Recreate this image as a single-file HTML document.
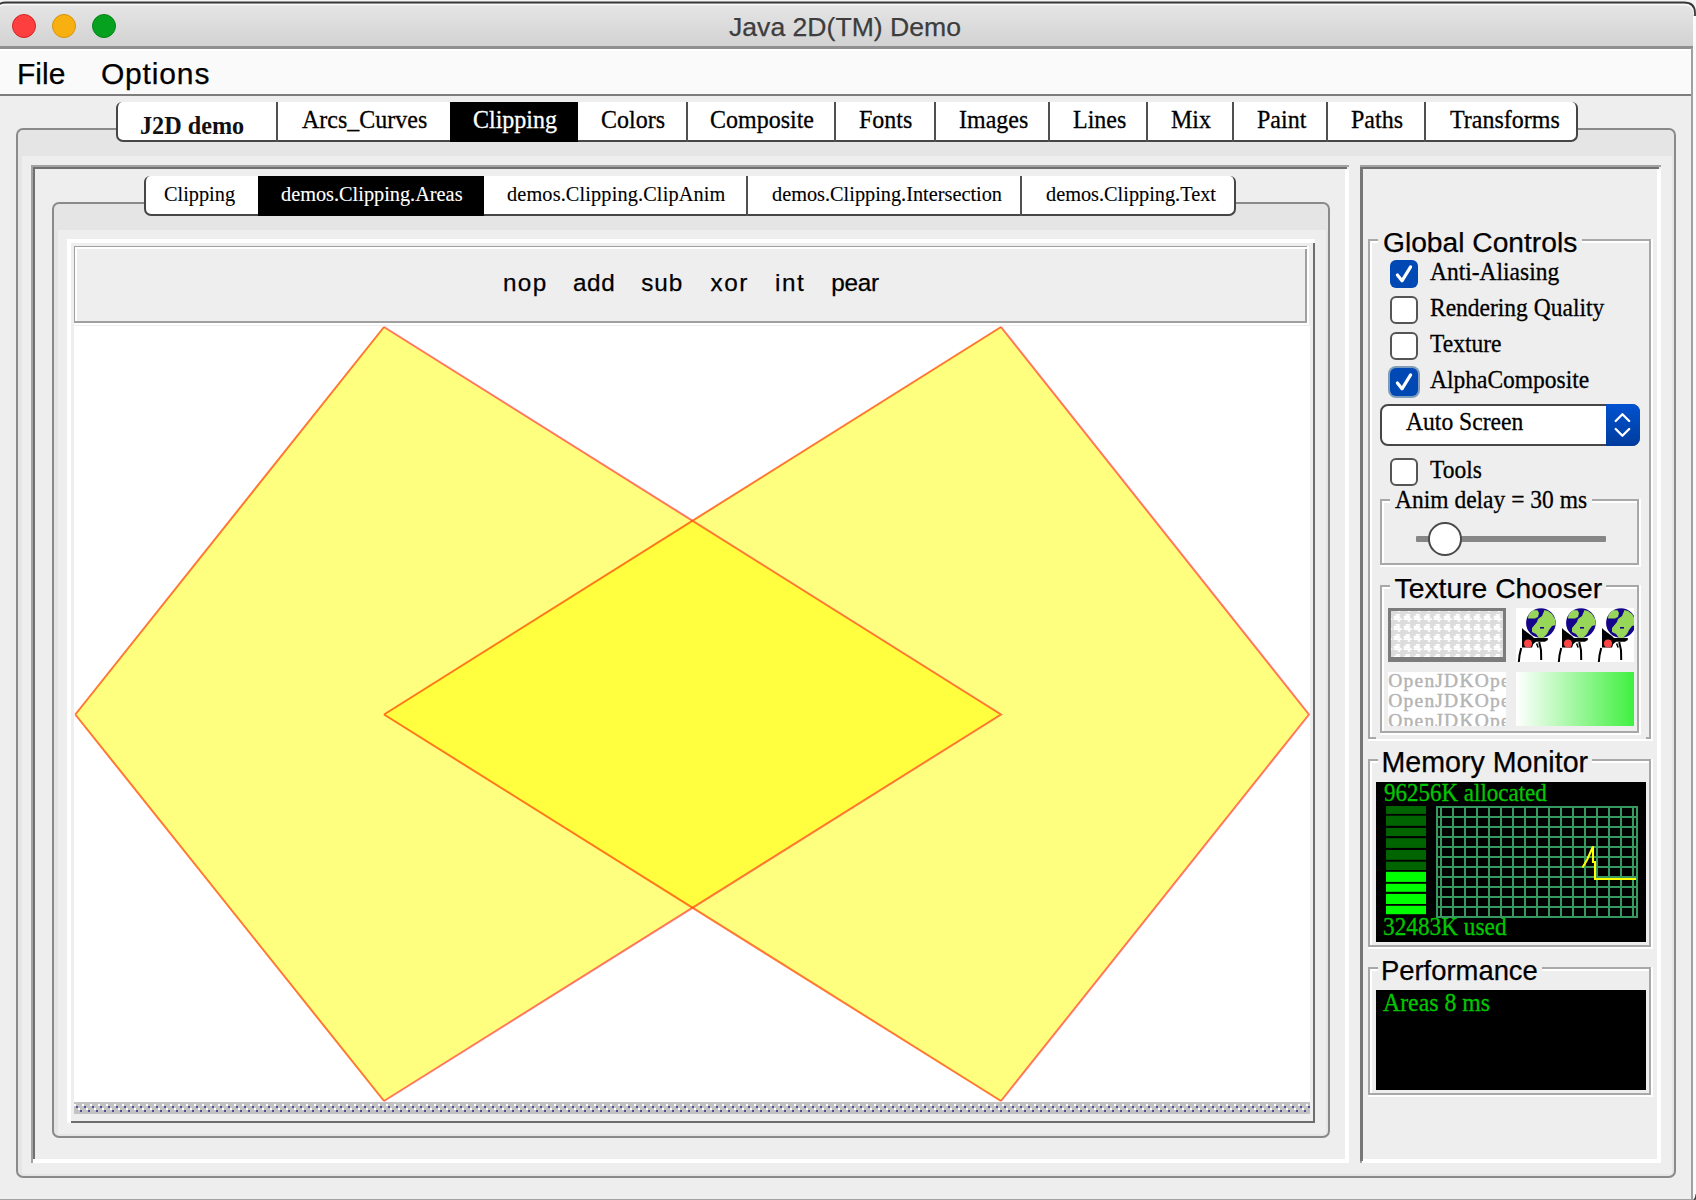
<!DOCTYPE html><html><head><meta charset="utf-8"><style>html,body{margin:0;padding:0;width:1696px;height:1200px;overflow:hidden;position:relative}</style></head><body><div style="position:absolute;left:0px;top:0px;width:1696px;height:1200px;background:#eeeeee"></div>
<div style="position:absolute;left:0px;top:0px;width:1696px;height:49px;background:#f4f4f4"></div>
<svg style="position:absolute;left:0;top:0" width="1696" height="50">
<defs><linearGradient id="tg" x1="0" y1="0" x2="0" y2="1"><stop offset="0" stop-color="#e6e6e6"/><stop offset="1" stop-color="#d2d2d2"/></linearGradient></defs>
<path d="M-4 46.5 L-4 13 Q-4 3 6 3 L1684 3 Q1694 3 1694 13 L1694 46.5 Z" fill="url(#tg)"/>
<path d="M-4 13 Q-4 3 6 3 L1684 3 Q1694 3 1694 13" fill="none" stroke="#fff" stroke-opacity="0.8" stroke-width="1.2" transform="translate(0,1.6)"/>
<path d="M-4.5 13 Q-4.5 2.5 6 2.5 L1684 2.5 Q1695 2.5 1695 13 L1695 16" fill="none" stroke="#383838" stroke-width="1.8"/>
</svg>
<div style="position:absolute;left:0px;top:46px;width:1694px;height:3px;background:#8f8f8f"></div>
<div style="position:absolute;left:12px;top:14px;width:24px;height:24px;box-sizing:border-box;border-radius:50%;background:#fe3f40;border:1.3px solid #d42426"></div>
<div style="position:absolute;left:52px;top:14px;width:24px;height:24px;box-sizing:border-box;border-radius:50%;background:#f7b00f;border:1.3px solid #d4940c"></div>
<div style="position:absolute;left:92px;top:14px;width:24px;height:24px;box-sizing:border-box;border-radius:50%;background:#06a11f;border:1.3px solid #04841a"></div>
<div style="position:absolute;left:729.00px;top:13.78px;font-family:'Liberation Sans', sans-serif;font-size:26.60px;line-height:26.60px;color:#3d3d3d;font-weight:normal;white-space:nowrap;-webkit-text-stroke:0.25px #3d3d3d;">Java 2D(TM) Demo</div>
<div style="position:absolute;left:0px;top:49px;width:1692px;height:45px;background:#fafafa"></div>
<div style="position:absolute;left:0px;top:49px;width:1692px;height:1.5px;background:#fff"></div>
<div style="position:absolute;left:0px;top:94px;width:1692px;height:2px;background:#7d7d7d"></div>
<div style="position:absolute;left:17.00px;top:58.61px;font-family:'Liberation Sans', sans-serif;font-size:30.00px;line-height:30.00px;color:#000;font-weight:normal;white-space:nowrap;-webkit-text-stroke:0.25px #000;">File</div>
<div style="position:absolute;left:100.90px;top:58.61px;font-family:'Liberation Sans', sans-serif;font-size:30.00px;line-height:30.00px;color:#000;font-weight:normal;white-space:nowrap;-webkit-text-stroke:0.25px #000;letter-spacing:0.85px">Options</div>
<div style="position:absolute;left:1691px;top:48px;width:2px;height:1152px;background:#a0a0a0"></div>
<div style="position:absolute;left:1693px;top:16px;width:3px;height:1184px;background:#fbfbfb"></div>
<svg style="position:absolute;left:1686px;top:1190px" width="10" height="10"><path d="M7.5 10.5 Q10 9 10.5 4" fill="none" stroke="#3a3a3a" stroke-width="1.8"/></svg>
<div style="position:absolute;left:0px;top:1198.5px;width:1693px;height:1.5px;background:#a3a3a3"></div>
<div style="position:absolute;left:16px;top:128px;width:1660px;height:1049.5px;box-sizing:border-box;border:2px solid #8a8a8a;border-radius:7px;background:#e5e5e5"></div>
<div style="position:absolute;left:22px;top:156px;width:1650px;height:1018px;background:#eeeeee"></div>
<div style="position:absolute;left:116px;top:102px;width:1462px;height:39.69999999999999px;box-sizing:border-box;border:2px solid #464646;border-top:0;border-radius:6px 6px 7px 7px;background:#fff"></div>
<div style="position:absolute;left:450px;top:102px;width:128px;height:39.69999999999999px;background:#000"></div>
<div style="position:absolute;left:276px;top:102px;width:2px;height:39.69999999999999px;background:#505050"></div>
<div style="position:absolute;left:686px;top:102px;width:2px;height:39.69999999999999px;background:#505050"></div>
<div style="position:absolute;left:834px;top:102px;width:2px;height:39.69999999999999px;background:#505050"></div>
<div style="position:absolute;left:934px;top:102px;width:2px;height:39.69999999999999px;background:#505050"></div>
<div style="position:absolute;left:1048px;top:102px;width:2px;height:39.69999999999999px;background:#505050"></div>
<div style="position:absolute;left:1146px;top:102px;width:2px;height:39.69999999999999px;background:#505050"></div>
<div style="position:absolute;left:1232px;top:102px;width:2px;height:39.69999999999999px;background:#505050"></div>
<div style="position:absolute;left:1326px;top:102px;width:2px;height:39.69999999999999px;background:#505050"></div>
<div style="position:absolute;left:1424px;top:102px;width:2px;height:39.69999999999999px;background:#505050"></div>
<div style="position:absolute;left:139.50px;top:112.72px;font-family:'Liberation Serif', serif;font-size:25.17px;line-height:25.17px;color:#111;font-weight:bold;white-space:nowrap;transform:scaleX(0.9615);transform-origin:0 0;">J2D demo</div>
<div style="position:absolute;left:301.50px;top:107.09px;font-family:'Liberation Serif', serif;font-size:25.92px;line-height:25.92px;color:#000;font-weight:normal;white-space:nowrap;transform:scaleX(0.9259);transform-origin:0 0;-webkit-text-stroke:0.3px #000;">Arcs_Curves</div>
<div style="position:absolute;left:472.60px;top:107.09px;font-family:'Liberation Serif', serif;font-size:25.92px;line-height:25.92px;color:#fff;font-weight:normal;white-space:nowrap;transform:scaleX(0.9259);transform-origin:0 0;-webkit-text-stroke:0.3px #fff;">Clipping</div>
<div style="position:absolute;left:600.80px;top:107.09px;font-family:'Liberation Serif', serif;font-size:25.92px;line-height:25.92px;color:#000;font-weight:normal;white-space:nowrap;transform:scaleX(0.9259);transform-origin:0 0;-webkit-text-stroke:0.3px #000;">Colors</div>
<div style="position:absolute;left:710.40px;top:107.09px;font-family:'Liberation Serif', serif;font-size:25.92px;line-height:25.92px;color:#000;font-weight:normal;white-space:nowrap;transform:scaleX(0.9259);transform-origin:0 0;-webkit-text-stroke:0.3px #000;">Composite</div>
<div style="position:absolute;left:859.00px;top:107.09px;font-family:'Liberation Serif', serif;font-size:25.92px;line-height:25.92px;color:#000;font-weight:normal;white-space:nowrap;transform:scaleX(0.9259);transform-origin:0 0;-webkit-text-stroke:0.3px #000;">Fonts</div>
<div style="position:absolute;left:959.00px;top:107.09px;font-family:'Liberation Serif', serif;font-size:25.92px;line-height:25.92px;color:#000;font-weight:normal;white-space:nowrap;transform:scaleX(0.9259);transform-origin:0 0;-webkit-text-stroke:0.3px #000;">Images</div>
<div style="position:absolute;left:1073.00px;top:107.09px;font-family:'Liberation Serif', serif;font-size:25.92px;line-height:25.92px;color:#000;font-weight:normal;white-space:nowrap;transform:scaleX(0.9259);transform-origin:0 0;-webkit-text-stroke:0.3px #000;">Lines</div>
<div style="position:absolute;left:1170.80px;top:107.09px;font-family:'Liberation Serif', serif;font-size:25.92px;line-height:25.92px;color:#000;font-weight:normal;white-space:nowrap;transform:scaleX(0.9259);transform-origin:0 0;-webkit-text-stroke:0.3px #000;">Mix</div>
<div style="position:absolute;left:1256.80px;top:107.09px;font-family:'Liberation Serif', serif;font-size:25.92px;line-height:25.92px;color:#000;font-weight:normal;white-space:nowrap;transform:scaleX(0.9259);transform-origin:0 0;-webkit-text-stroke:0.3px #000;">Paint</div>
<div style="position:absolute;left:1351.30px;top:107.09px;font-family:'Liberation Serif', serif;font-size:25.92px;line-height:25.92px;color:#000;font-weight:normal;white-space:nowrap;transform:scaleX(0.9259);transform-origin:0 0;-webkit-text-stroke:0.3px #000;">Paths</div>
<div style="position:absolute;left:1450.00px;top:107.09px;font-family:'Liberation Serif', serif;font-size:25.92px;line-height:25.92px;color:#000;font-weight:normal;white-space:nowrap;transform:scaleX(0.9259);transform-origin:0 0;-webkit-text-stroke:0.3px #000;">Transforms</div>
<div style="position:absolute;left:31px;top:165px;width:1318px;height:2px;background:#a2a2a2"></div>
<div style="position:absolute;left:31px;top:165px;width:2px;height:998px;background:#a2a2a2"></div>
<div style="position:absolute;left:33px;top:167px;width:1314px;height:2px;background:#707070"></div>
<div style="position:absolute;left:33px;top:167px;width:2px;height:994px;background:#707070"></div>
<div style="position:absolute;left:1345px;top:169px;width:4px;height:994px;background:#fff"></div>
<div style="position:absolute;left:33px;top:1159px;width:1316px;height:4px;background:#fff"></div>
<div style="position:absolute;left:1360px;top:165px;width:301px;height:2px;background:#a2a2a2"></div>
<div style="position:absolute;left:1360px;top:165px;width:2px;height:998px;background:#a2a2a2"></div>
<div style="position:absolute;left:1362px;top:167px;width:297px;height:2px;background:#707070"></div>
<div style="position:absolute;left:1362px;top:167px;width:2px;height:994px;background:#707070"></div>
<div style="position:absolute;left:1657px;top:169px;width:4px;height:994px;background:#fff"></div>
<div style="position:absolute;left:1362px;top:1159px;width:299px;height:4px;background:#fff"></div>
<div style="position:absolute;left:1360px;top:167px;width:3px;height:994px;background:#777"></div>
<div style="position:absolute;left:1363px;top:169px;width:1px;height:990px;background:#eeeeee"></div>
<div style="position:absolute;left:52px;top:202px;width:1278px;height:935.7px;box-sizing:border-box;border:2px solid #8a8a8a;border-radius:7px;background:#e5e5e5"></div>
<div style="position:absolute;left:58px;top:230px;width:1268px;height:904px;background:#eeeeee"></div>
<div style="position:absolute;left:144px;top:176px;width:1092px;height:39.599999999999994px;box-sizing:border-box;border:2px solid #464646;border-top:0;border-radius:6px 6px 7px 7px;background:#fff"></div>
<div style="position:absolute;left:258px;top:176px;width:226px;height:39.599999999999994px;background:#000"></div>
<div style="position:absolute;left:746px;top:176px;width:2px;height:39.599999999999994px;background:#505050"></div>
<div style="position:absolute;left:1020px;top:176px;width:2px;height:39.599999999999994px;background:#505050"></div>
<div style="position:absolute;left:163.50px;top:184.45px;font-family:'Liberation Serif', serif;font-size:21.32px;line-height:21.32px;color:#000;font-weight:normal;white-space:nowrap;transform:scaleX(0.9524);transform-origin:0 0;-webkit-text-stroke:0.12px #000;">Clipping</div>
<div style="position:absolute;left:281.20px;top:184.45px;font-family:'Liberation Serif', serif;font-size:21.32px;line-height:21.32px;color:#fff;font-weight:normal;white-space:nowrap;transform:scaleX(0.9524);transform-origin:0 0;-webkit-text-stroke:0.12px #fff;">demos.Clipping.Areas</div>
<div style="position:absolute;left:507.30px;top:184.45px;font-family:'Liberation Serif', serif;font-size:21.32px;line-height:21.32px;color:#000;font-weight:normal;white-space:nowrap;transform:scaleX(0.9524);transform-origin:0 0;-webkit-text-stroke:0.12px #000;letter-spacing:0.14px">demos.Clipping.ClipAnim</div>
<div style="position:absolute;left:772.00px;top:184.45px;font-family:'Liberation Serif', serif;font-size:21.32px;line-height:21.32px;color:#000;font-weight:normal;white-space:nowrap;transform:scaleX(0.9524);transform-origin:0 0;-webkit-text-stroke:0.12px #000;">demos.Clipping.Intersection</div>
<div style="position:absolute;left:1046.00px;top:184.45px;font-family:'Liberation Serif', serif;font-size:21.32px;line-height:21.32px;color:#000;font-weight:normal;white-space:nowrap;transform:scaleX(0.9524);transform-origin:0 0;-webkit-text-stroke:0.12px #000;">demos.Clipping.Text</div>
<div style="position:absolute;left:67px;top:239px;width:1248px;height:884px;background:#fff"></div>
<div style="position:absolute;left:71px;top:243px;width:1242px;height:878px;background:#eeeeee"></div>
<div style="position:absolute;left:1313px;top:243px;width:2px;height:880px;background:#6e6e6e"></div>
<div style="position:absolute;left:71px;top:1121px;width:1244px;height:2px;background:#6e6e6e"></div>
<div style="position:absolute;left:74px;top:246px;width:1233px;height:77px;background:#a0a0a0"></div>
<div style="position:absolute;left:75px;top:247px;width:1232px;height:76px;background:#fff"></div>
<div style="position:absolute;left:77px;top:249px;width:1228px;height:72px;background:#eeeeee"></div>
<div style="position:absolute;left:1305px;top:249px;width:2px;height:74px;background:#a0a0a0"></div>
<div style="position:absolute;left:74px;top:321px;width:1233px;height:2px;background:#a0a0a0"></div>
<div style="position:absolute;left:1307px;top:246px;width:2px;height:79px;background:#fff"></div>
<div style="position:absolute;left:74px;top:323px;width:1235px;height:2px;background:#fff"></div>
<div style="position:absolute;left:503.00px;top:271.43px;font-family:'Liberation Sans', sans-serif;font-size:24.30px;line-height:24.30px;color:#000;font-weight:normal;white-space:nowrap;-webkit-text-stroke:0.25px #000;letter-spacing:1.3px">nop</div>
<div style="position:absolute;left:573.00px;top:271.43px;font-family:'Liberation Sans', sans-serif;font-size:24.30px;line-height:24.30px;color:#000;font-weight:normal;white-space:nowrap;-webkit-text-stroke:0.25px #000;letter-spacing:0.6px">add</div>
<div style="position:absolute;left:641.30px;top:271.43px;font-family:'Liberation Sans', sans-serif;font-size:24.30px;line-height:24.30px;color:#000;font-weight:normal;white-space:nowrap;-webkit-text-stroke:0.25px #000;letter-spacing:0.85px">sub</div>
<div style="position:absolute;left:710.50px;top:271.43px;font-family:'Liberation Sans', sans-serif;font-size:24.30px;line-height:24.30px;color:#000;font-weight:normal;white-space:nowrap;-webkit-text-stroke:0.25px #000;letter-spacing:1.5px">xor</div>
<div style="position:absolute;left:775.10px;top:271.43px;font-family:'Liberation Sans', sans-serif;font-size:24.30px;line-height:24.30px;color:#000;font-weight:normal;white-space:nowrap;-webkit-text-stroke:0.25px #000;letter-spacing:1.5px">int</div>
<div style="position:absolute;left:831.30px;top:271.43px;font-family:'Liberation Sans', sans-serif;font-size:24.30px;line-height:24.30px;color:#000;font-weight:normal;white-space:nowrap;-webkit-text-stroke:0.25px #000;letter-spacing:-0.3px">pear</div>
<div style="position:absolute;left:74px;top:325px;width:1236px;height:1px;background:#ededed"></div>
<div style="position:absolute;left:74px;top:326px;width:1236px;height:776px;background:#fff"></div>
<svg style="position:absolute;left:0;top:0" width="1696" height="1200" viewBox="0 0 1696 1200">
<defs><clipPath id="cv"><rect x="74" y="326" width="1236" height="776"/></clipPath>
<pattern id="chk" x="74" y="1102" width="8" height="12" patternUnits="userSpaceOnUse">
<rect width="8" height="12" fill="#c2c2c2"/>
<rect x="0" y="2" width="2" height="2" fill="#fff"/>
<rect x="2" y="4" width="2" height="2" fill="#50509a"/>
<rect x="4" y="6" width="2" height="2" fill="#fff"/>
<rect x="6" y="8" width="2" height="2" fill="#50509a"/>
</pattern></defs>
<g clip-path="url(#cv)">
<polygon points="384,327 1001,714.5 384,1101 75.3,714.5" fill="rgba(255,255,0,0.5)"/>
<polygon points="1001,327 1309,714.5 1001,1101 384,714.5" fill="rgba(255,255,0,0.5)"/>
<g fill="none" stroke-width="2" stroke-linecap="butt">
<path d="M75.3 714.5 L384 327 M75.3 714.5 L384 1101" stroke="rgba(255,75,0,0.75)"/>
<path d="M384 327 L1001 714.5 L384 1101" stroke="rgba(255,10,10,0.55)"/>
<path d="M384 714.5 L1001 327 M384 714.5 L1001 1101" stroke="rgba(255,75,0,0.75)"/>
<path d="M1001 327 L1309 714.5 L1001 1101" stroke="rgba(255,10,10,0.55)"/>
</g>
</g>
<rect x="74" y="1102" width="1236" height="12" fill="url(#chk)"/>
</svg>
<div style="position:absolute;left:1368px;top:239px;width:283px;height:500px;box-sizing:border-box;border:2px solid #a8a8a8"></div>
<div style="position:absolute;left:1370px;top:241px;width:279px;height:496px;box-sizing:border-box;border-top:2px solid #fff;border-left:2px solid #fff"></div>
<div style="position:absolute;left:1368px;top:739px;width:285px;height:2px;background:#fff"></div>
<div style="position:absolute;left:1651px;top:239px;width:2px;height:502px;background:#fff"></div>
<div style="position:absolute;left:1377.7px;top:237px;width:204.29999999999995px;height:7px;background:#eeeeee"></div>
<div style="position:absolute;left:1383.00px;top:228.13px;font-family:'Liberation Sans', sans-serif;font-size:28.20px;line-height:28.20px;color:#000;font-weight:normal;white-space:nowrap;-webkit-text-stroke:0.25px #000;">Global Controls</div>
<div style="position:absolute;left:1390px;top:260px;width:28px;height:28px;box-sizing:border-box;border-radius:6px;background:#0048b4"></div>
<svg style="position:absolute;left:1390px;top:260px" width="28" height="28"><path d="M7.4 15 L12 20.8 L20.6 6.9" fill="none" stroke="#fff" stroke-width="3.2" stroke-linecap="round" stroke-linejoin="round"/></svg>
<div style="position:absolute;left:1430.40px;top:258.74px;font-family:'Liberation Serif', serif;font-size:25.38px;line-height:25.38px;color:#000;font-weight:normal;white-space:nowrap;transform:scaleX(0.9259);transform-origin:0 0;-webkit-text-stroke:0.3px #000;">Anti-Aliasing</div>
<div style="position:absolute;left:1390px;top:296px;width:28px;height:28px;box-sizing:border-box;border-radius:6px;background:#fff;border:2px solid #555"></div>
<div style="position:absolute;left:1430.40px;top:294.74px;font-family:'Liberation Serif', serif;font-size:25.38px;line-height:25.38px;color:#000;font-weight:normal;white-space:nowrap;transform:scaleX(0.9259);transform-origin:0 0;-webkit-text-stroke:0.3px #000;">Rendering Quality</div>
<div style="position:absolute;left:1390px;top:332px;width:28px;height:28px;box-sizing:border-box;border-radius:6px;background:#fff;border:2px solid #555"></div>
<div style="position:absolute;left:1430.40px;top:330.74px;font-family:'Liberation Serif', serif;font-size:25.38px;line-height:25.38px;color:#000;font-weight:normal;white-space:nowrap;transform:scaleX(0.9259);transform-origin:0 0;-webkit-text-stroke:0.3px #000;">Texture</div>
<div style="position:absolute;left:1390px;top:368px;width:28px;height:28px;box-sizing:border-box;border-radius:6px;background:#0048b4;box-shadow:0 0 0 2px rgba(90,130,170,0.75)"></div>
<svg style="position:absolute;left:1390px;top:368px" width="28" height="28"><path d="M7.4 15 L12 20.8 L20.6 6.9" fill="none" stroke="#fff" stroke-width="3.2" stroke-linecap="round" stroke-linejoin="round"/></svg>
<div style="position:absolute;left:1430.40px;top:366.74px;font-family:'Liberation Serif', serif;font-size:25.38px;line-height:25.38px;color:#000;font-weight:normal;white-space:nowrap;transform:scaleX(0.9259);transform-origin:0 0;-webkit-text-stroke:0.3px #000;">AlphaComposite</div>
<div style="position:absolute;left:1380px;top:404px;width:260px;height:42px;box-sizing:border-box;border:2px solid #464646;border-radius:8px;background:#fff"></div>
<div style="position:absolute;left:1606px;top:404px;width:34px;height:41.7px;border-radius:0 8px 8px 0;background:linear-gradient(#0052d0,#003c9e)"></div>
<svg style="position:absolute;left:1606px;top:404px" width="34" height="42"><path d="M9.7 17 L16.4 10.2 L23.2 17 M9.7 25 L16.4 31.8 L23.2 25" fill="none" stroke="#fff" stroke-width="2.3" stroke-linecap="round" stroke-linejoin="round"/></svg>
<div style="position:absolute;left:1406.30px;top:408.65px;font-family:'Liberation Serif', serif;font-size:25.49px;line-height:25.49px;color:#000;font-weight:normal;white-space:nowrap;transform:scaleX(0.9259);transform-origin:0 0;-webkit-text-stroke:0.3px #000;">Auto Screen</div>
<div style="position:absolute;left:1390px;top:458px;width:28px;height:28px;box-sizing:border-box;border-radius:6px;background:#fff;border:2px solid #555"></div>
<div style="position:absolute;left:1430.40px;top:456.74px;font-family:'Liberation Serif', serif;font-size:25.38px;line-height:25.38px;color:#000;font-weight:normal;white-space:nowrap;transform:scaleX(0.9259);transform-origin:0 0;-webkit-text-stroke:0.3px #000;">Tools</div>
<div style="position:absolute;left:1380px;top:499px;width:259px;height:66px;box-sizing:border-box;border:2px solid #a8a8a8"></div>
<div style="position:absolute;left:1382px;top:501px;width:255px;height:62px;box-sizing:border-box;border-top:2px solid #fff;border-left:2px solid #fff"></div>
<div style="position:absolute;left:1380px;top:565px;width:261px;height:2px;background:#fff"></div>
<div style="position:absolute;left:1639px;top:499px;width:2px;height:68px;background:#fff"></div>
<div style="position:absolute;left:1390px;top:497px;width:202px;height:7px;background:#eeeeee"></div>
<div style="position:absolute;left:1394.50px;top:486.74px;font-family:'Liberation Serif', serif;font-size:25.38px;line-height:25.38px;color:#000;font-weight:normal;white-space:nowrap;transform:scaleX(0.9259);transform-origin:0 0;-webkit-text-stroke:0.3px #000;">Anim delay = 30 ms</div>
<div style="position:absolute;left:1416px;top:536px;width:190px;height:6px;background:#868686;border-radius:1px"></div>
<div style="position:absolute;left:1428.1px;top:522px;width:33.8px;height:33.6px;box-sizing:border-box;border-radius:50%;background:#fff;border:2px solid #4a4a4a"></div>
<div style="position:absolute;left:1380px;top:585px;width:259px;height:148px;box-sizing:border-box;border:2px solid #a8a8a8"></div>
<div style="position:absolute;left:1382px;top:587px;width:255px;height:144px;box-sizing:border-box;border-top:2px solid #fff;border-left:2px solid #fff"></div>
<div style="position:absolute;left:1380px;top:733px;width:261px;height:2px;background:#fff"></div>
<div style="position:absolute;left:1639px;top:585px;width:2px;height:150px;background:#fff"></div>
<div style="position:absolute;left:1390px;top:583px;width:216px;height:7px;background:#eeeeee"></div>
<div style="position:absolute;left:1376px;top:736px;width:270px;height:3px;background:#eeeeee"></div>
<div style="position:absolute;left:1394.50px;top:573.74px;font-family:'Liberation Sans', sans-serif;font-size:28.30px;line-height:28.30px;color:#000;font-weight:normal;white-space:nowrap;-webkit-text-stroke:0.25px #000;">Texture Chooser</div>
<svg style="position:absolute;left:1388px;top:608px" width="118" height="54" viewBox="0 0 118 54">
<defs><pattern id="plus" x="5.75" y="6" width="10" height="10" patternUnits="userSpaceOnUse">
<rect width="10" height="10" fill="#dcdcdc"/>
<rect x="2" y="0" width="4.25" height="1.75" fill="#fff"/>
<rect x="0" y="1.75" width="6.25" height="2.5" fill="#fff"/>
<rect x="0" y="4.25" width="8.25" height="1.75" fill="#fff"/>
<rect x="4.25" y="6" width="2" height="2" fill="#fff"/>
</pattern></defs>
<rect x="0" y="0" width="118" height="54" fill="#7c7c7c"/>
<rect x="3" y="3" width="112" height="46" fill="url(#plus)"/>
</svg>
<svg style="position:absolute;left:1516px;top:608px" width="118" height="54" viewBox="0 0 118 54">
<rect width="118" height="54" fill="#fff"/>
<g transform="translate(0,0)"><g>
<circle cx="24.9" cy="15" r="14.8" fill="#14048c"/>
<polygon points="17,2.2 21.5,2.2 23,5 22,9 19,10.5 12,10.5 12.5,7 15,4" fill="#98d65a"/>
<polygon points="28.5,2 32,3 36,6 39,11 39.6,17 36,18 33,22 31,26 27,30 23,30 20,26 16,24 16,20 21,14 22,11 26,8" fill="#98d65a"/>
<rect x="24" y="19" width="4" height="1.6" fill="#14048c"/>
<polygon points="6,20 8,22 12,25 16,28 18,30 31.8,30 31.8,32 29,33.8 20,33.8 17.3,36 16,39.6 6,39.6" fill="#000"/>
<circle cx="12" cy="35.5" r="4" fill="#ff4646"/>
<path d="M5.2 40 L3.6 47 L2.8 54 M23.2 34 L25 42 L25.2 52" stroke="#000" stroke-width="2" fill="none"/>
<path d="M20.6 35.5 L22.2 39.5" stroke="#000" stroke-width="1.6" fill="none"/>
</g></g><g transform="translate(40,0)"><g>
<circle cx="24.9" cy="15" r="14.8" fill="#14048c"/>
<polygon points="17,2.2 21.5,2.2 23,5 22,9 19,10.5 12,10.5 12.5,7 15,4" fill="#98d65a"/>
<polygon points="28.5,2 32,3 36,6 39,11 39.6,17 36,18 33,22 31,26 27,30 23,30 20,26 16,24 16,20 21,14 22,11 26,8" fill="#98d65a"/>
<rect x="24" y="19" width="4" height="1.6" fill="#14048c"/>
<polygon points="6,20 8,22 12,25 16,28 18,30 31.8,30 31.8,32 29,33.8 20,33.8 17.3,36 16,39.6 6,39.6" fill="#000"/>
<circle cx="12" cy="35.5" r="4" fill="#ff4646"/>
<path d="M5.2 40 L3.6 47 L2.8 54 M23.2 34 L25 42 L25.2 52" stroke="#000" stroke-width="2" fill="none"/>
<path d="M20.6 35.5 L22.2 39.5" stroke="#000" stroke-width="1.6" fill="none"/>
</g></g><g transform="translate(80,0)"><g>
<circle cx="24.9" cy="15" r="14.8" fill="#14048c"/>
<polygon points="17,2.2 21.5,2.2 23,5 22,9 19,10.5 12,10.5 12.5,7 15,4" fill="#98d65a"/>
<polygon points="28.5,2 32,3 36,6 39,11 39.6,17 36,18 33,22 31,26 27,30 23,30 20,26 16,24 16,20 21,14 22,11 26,8" fill="#98d65a"/>
<rect x="24" y="19" width="4" height="1.6" fill="#14048c"/>
<polygon points="6,20 8,22 12,25 16,28 18,30 31.8,30 31.8,32 29,33.8 20,33.8 17.3,36 16,39.6 6,39.6" fill="#000"/>
<circle cx="12" cy="35.5" r="4" fill="#ff4646"/>
<path d="M5.2 40 L3.6 47 L2.8 54 M23.2 34 L25 42 L25.2 52" stroke="#000" stroke-width="2" fill="none"/>
<path d="M20.6 35.5 L22.2 39.5" stroke="#000" stroke-width="1.6" fill="none"/>
</g></g>
</svg>
<div style="position:absolute;left:1388px;top:672px;width:118px;height:54px;background:#fff;overflow:hidden">
<div style="position:absolute;top:-0.8px;left:0.3px;font-family:'Liberation Serif', serif;font-size:19.5px;line-height:19.5px;color:#b4b4b4;-webkit-text-stroke:0.45px #b4b4b4;letter-spacing:1.2px;white-space:nowrap">OpenJDKOpenJDK</div>
<div style="position:absolute;top:19.2px;left:0.3px;font-family:'Liberation Serif', serif;font-size:19.5px;line-height:19.5px;color:#b4b4b4;-webkit-text-stroke:0.45px #b4b4b4;letter-spacing:1.2px;white-space:nowrap">OpenJDKOpenJDK</div>
<div style="position:absolute;top:39.2px;left:0.3px;font-family:'Liberation Serif', serif;font-size:19.5px;line-height:19.5px;color:#b4b4b4;-webkit-text-stroke:0.45px #b4b4b4;letter-spacing:1.2px;white-space:nowrap">OpenJDKOpenJDK</div>
</div>
<div style="position:absolute;left:1516px;top:672px;width:118px;height:54px;background:linear-gradient(to right,#fff,#40f040)"></div>
<div style="position:absolute;left:1368px;top:759px;width:283px;height:188px;box-sizing:border-box;border:2px solid #a8a8a8"></div>
<div style="position:absolute;left:1370px;top:761px;width:279px;height:184px;box-sizing:border-box;border-top:2px solid #fff;border-left:2px solid #fff"></div>
<div style="position:absolute;left:1368px;top:947px;width:285px;height:2px;background:#fff"></div>
<div style="position:absolute;left:1651px;top:759px;width:2px;height:190px;background:#fff"></div>
<div style="position:absolute;left:1377.7px;top:757px;width:214.29999999999995px;height:7px;background:#eeeeee"></div>
<div style="position:absolute;left:1381.50px;top:747.79px;font-family:'Liberation Sans', sans-serif;font-size:28.60px;line-height:28.60px;color:#000;font-weight:normal;white-space:nowrap;-webkit-text-stroke:0.25px #000;">Memory Monitor</div>
<div style="position:absolute;left:1376px;top:782px;width:270px;height:160px;background:#000"></div>
<div style="position:absolute;left:1384.00px;top:781.00px;font-family:'Liberation Serif', serif;font-size:24.84px;line-height:24.84px;color:#00c800;font-weight:normal;white-space:nowrap;transform:scaleX(0.9259);transform-origin:0 0;-webkit-text-stroke:0.3px #00c800;">96256K allocated</div>
<div style="position:absolute;left:1382.60px;top:913.53px;font-family:'Liberation Serif', serif;font-size:25.16px;line-height:25.16px;color:#00c800;font-weight:normal;white-space:nowrap;transform:scaleX(0.9259);transform-origin:0 0;-webkit-text-stroke:0.3px #00c800;">32483K used</div>
<svg style="position:absolute;left:0;top:0" width="1696" height="1200"><rect x="1386" y="806.0" width="40" height="7.9" fill="#006400"/><rect x="1386" y="815.7" width="40" height="10.1" fill="#006400"/><rect x="1386" y="827.9" width="40" height="8.2" fill="#006400"/><rect x="1386" y="838.2" width="40" height="9.7" fill="#006400"/><rect x="1386" y="850.0" width="40" height="9.8" fill="#006400"/><rect x="1386" y="861.7" width="40" height="8.3" fill="#006400"/><rect x="1386" y="871.8" width="40" height="10.1" fill="#00ff00"/><rect x="1386" y="883.8" width="40" height="8.0" fill="#00ff00"/><rect x="1386" y="893.9" width="40" height="10.1" fill="#00ff00"/><rect x="1386" y="905.8" width="40" height="8.4" fill="#00ff00"/><rect x="1437" y="807" width="200" height="110" fill="none" stroke="#36995f" stroke-width="2"/><rect x="1440" y="806" width="2" height="112" fill="#36995f"/><rect x="1452" y="806" width="2" height="112" fill="#36995f"/><rect x="1464" y="806" width="2" height="112" fill="#36995f"/><rect x="1476" y="806" width="2" height="112" fill="#36995f"/><rect x="1488" y="806" width="2" height="112" fill="#36995f"/><rect x="1500" y="806" width="2" height="112" fill="#36995f"/><rect x="1512" y="806" width="2" height="112" fill="#36995f"/><rect x="1524" y="806" width="2" height="112" fill="#36995f"/><rect x="1536" y="806" width="2" height="112" fill="#36995f"/><rect x="1548" y="806" width="2" height="112" fill="#36995f"/><rect x="1560" y="806" width="2" height="112" fill="#36995f"/><rect x="1572" y="806" width="2" height="112" fill="#36995f"/><rect x="1584" y="806" width="2" height="112" fill="#36995f"/><rect x="1596" y="806" width="2" height="112" fill="#36995f"/><rect x="1608" y="806" width="2" height="112" fill="#36995f"/><rect x="1620" y="806" width="2" height="112" fill="#36995f"/><rect x="1632" y="806" width="2" height="112" fill="#36995f"/><rect x="1436" y="816" width="202" height="2" fill="#36995f"/><rect x="1436" y="826" width="202" height="2" fill="#36995f"/><rect x="1436" y="836" width="202" height="2" fill="#36995f"/><rect x="1436" y="846" width="202" height="2" fill="#36995f"/><rect x="1436" y="856" width="202" height="2" fill="#36995f"/><rect x="1436" y="866" width="202" height="2" fill="#36995f"/><rect x="1436" y="876" width="202" height="2" fill="#36995f"/><rect x="1436" y="886" width="202" height="2" fill="#36995f"/><rect x="1436" y="896" width="202" height="2" fill="#36995f"/><rect x="1436" y="906" width="202" height="2" fill="#36995f"/><polyline points="1582.5,867.5 1587,860 1593,846.5 1593,862 1595,862 1595,879 1636,879" fill="none" stroke="#ffff00" stroke-width="2.1" stroke-linejoin="miter"/></svg>
<div style="position:absolute;left:1368px;top:967px;width:283px;height:128px;box-sizing:border-box;border:2px solid #a8a8a8"></div>
<div style="position:absolute;left:1370px;top:969px;width:279px;height:124px;box-sizing:border-box;border-top:2px solid #fff;border-left:2px solid #fff"></div>
<div style="position:absolute;left:1368px;top:1095px;width:285px;height:2px;background:#fff"></div>
<div style="position:absolute;left:1651px;top:967px;width:2px;height:130px;background:#fff"></div>
<div style="position:absolute;left:1377.7px;top:965px;width:164.29999999999995px;height:7px;background:#eeeeee"></div>
<div style="position:absolute;left:1381.00px;top:956.81px;font-family:'Liberation Sans', sans-serif;font-size:27.40px;line-height:27.40px;color:#000;font-weight:normal;white-space:nowrap;-webkit-text-stroke:0.25px #000;">Performance</div>
<div style="position:absolute;left:1376px;top:990px;width:270px;height:100px;background:#000"></div>
<div style="position:absolute;left:1383.00px;top:989.77px;font-family:'Liberation Serif', serif;font-size:25.70px;line-height:25.70px;color:#00c800;font-weight:normal;white-space:nowrap;transform:scaleX(0.9259);transform-origin:0 0;-webkit-text-stroke:0.3px #00c800;">Areas 8 ms</div></body></html>
